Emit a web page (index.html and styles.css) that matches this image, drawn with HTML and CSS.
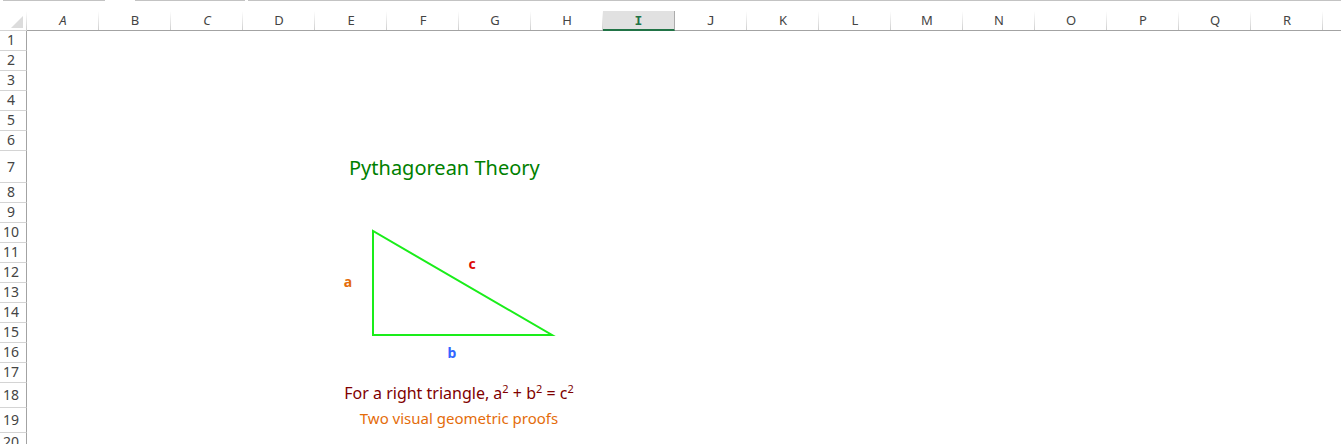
FILE: index.html
```html
<!DOCTYPE html>
<html lang="en">
<head>
<meta charset="utf-8">
<title>Pythagorean Theory</title>
<link rel="stylesheet" href="styles.css">
</head>
<body>
<main class="app">
  <div class="formula-bar"><span class="name-box"></span><span class="buttons"></span><span class="formula"></span></div>
  <div class="sheet">
    <table class="grid">
      <colgroup><col class="numbers"><col span="19" class="column"></colgroup>
      <thead>
        <tr>
          <td class="corner"><svg class="select-all" viewBox="0 0 12 12" aria-hidden="true"><path d="M12 0V12H0Z"/></svg></td>
          <th scope="col" class="slanted">A</th><th scope="col">B</th><th scope="col" class="slanted">C</th><th scope="col">D</th><th scope="col">E</th><th scope="col">F</th><th scope="col">G</th><th scope="col">H</th><th scope="col" class="barred selected">I</th><th scope="col" class="barred">J</th><th scope="col">K</th><th scope="col">L</th><th scope="col">M</th><th scope="col">N</th><th scope="col">O</th><th scope="col">P</th><th scope="col">Q</th><th scope="col">R</th><td></td>
        </tr>
      </thead>
      <tbody>
        <tr><th scope="row">1</th><td colspan="19"></td></tr>
        <tr><th scope="row">2</th><td colspan="19"></td></tr>
        <tr><th scope="row">3</th><td colspan="19"></td></tr>
        <tr><th scope="row">4</th><td colspan="19"></td></tr>
        <tr><th scope="row">5</th><td colspan="19"></td></tr>
        <tr><th scope="row">6</th><td colspan="19"></td></tr>
        <tr class="tall"><th scope="row">7</th><td colspan="4"></td><td colspan="4" class="title">Pythagorean Theory</td><td colspan="11"></td></tr>
        <tr><th scope="row">8</th><td colspan="19"></td></tr>
        <tr><th scope="row">9</th><td colspan="19"></td></tr>
        <tr><th scope="row">10</th><td colspan="19"></td></tr>
        <tr><th scope="row">11</th><td colspan="19"></td></tr>
        <tr><th scope="row">12</th><td colspan="19"></td></tr>
        <tr><th scope="row">13</th><td colspan="19"></td></tr>
        <tr><th scope="row">14</th><td colspan="19"></td></tr>
        <tr><th scope="row">15</th><td colspan="19"></td></tr>
        <tr><th scope="row">16</th><td colspan="19"></td></tr>
        <tr><th scope="row">17</th><td colspan="19"></td></tr>
        <tr class="medium"><th scope="row">18</th><td colspan="4"></td><td colspan="4" class="theorem">For a right triangle, a<sup>2</sup> + b<sup>2</sup> = c<sup>2</sup></td><td colspan="11"></td></tr>
        <tr class="medium"><th scope="row">19</th><td colspan="4"></td><td colspan="4" class="proofs">Two visual geometric proofs</td><td colspan="11"></td></tr>
        <tr><th scope="row">20</th><td colspan="19"></td></tr>
      </tbody>
    </table>
    <svg class="triangle" viewBox="0 0 220 140" role="img" aria-label="Right triangle with sides a, b and c">
      <path d="M33 9V113H212Z"/>
      <text class="side-a" x="8" y="65">a</text>
      <text class="side-b" x="112" y="136">b</text>
      <text class="side-c" x="132" y="47">c</text>
    </svg>
  </div>
</main>
</body>
</html>
```
FILE: styles.css
```css
body {
  margin: 0;
  background: #fff;
  font-family: "Comic Sans MS", "Noto Sans", sans-serif;
}

.app {
  height: 100vh;
  overflow: hidden;
}

.formula-bar {
  display: flex;
  height: 11px;
  padding-left: 3px;
}

.name-box,
.buttons,
.formula {
  height: 1px;
  background: #c3c3c3;
}

.name-box {
  width: 102px;
}

.buttons {
  width: 110px;
  margin: 0 3px 0 30px;
}

.formula {
  flex: 1;
}

.sheet {
  position: relative;
}

.grid {
  width: 1395px;
  table-layout: fixed;
  border-collapse: separate;
  border-spacing: 0;
}

.numbers {
  width: 27px;
}

.column {
  width: 72px;
}

.grid th,
.grid td {
  box-sizing: border-box;
  height: 20px;
  padding: 0;
  line-height: 17px;
  white-space: nowrap;
}

.grid th {
  padding-bottom: 2px;
  color: #444;
  font-size: 14px;
  font-weight: 400;
}

.grid thead th,
.grid thead td {
  border-bottom: 1px solid #a3a3a3;
  background: linear-gradient(#fff, #cfcfcf) right / 1px 100% no-repeat;
}

.grid thead th {
  padding-bottom: 0;
  font-size: 13px;
}

.grid thead .corner {
  padding: 3px 4px 0 11px;
  border-bottom-color: #d4d4d4;
}

.select-all {
  display: block;
  width: 12px;
  height: 12px;
  fill: #dcdcdc;
}

.grid .slanted {
  font-style: italic;
}

.grid .barred {
  font-family: "Comic Sans MS", "DejaVu Sans Mono", monospace;
}

.grid thead .selected {
  border-right: 1px solid #ababab;
  border-bottom: 2px solid #217346;
  background: #e1e1e1;
  color: #217346;
  font-weight: 700;
}

.grid tbody th {
  padding-right: 4px;
  border-right: 1px solid #a3a3a3;
  border-bottom: 1px solid #d4d4d4;
}

.grid .tall th,
.grid .tall td {
  height: 32px;
}

.grid .medium th,
.grid .medium td {
  height: 25px;
}

.grid .tall th {
  padding-bottom: 0;
}

.grid .title {
  padding-left: 34px;
  color: #008000;
  font-size: 20px;
}

.grid .theorem,
.grid .proofs {
  padding-bottom: 4px;
  text-align: center;
}

.theorem {
  color: #800000;
  font-size: 16px;
}

.theorem sup {
  font-size: 11px;
  line-height: 0;
}

.proofs {
  color: #e46c0a;
  font-size: 15px;
}

.triangle {
  position: absolute;
  top: 211px;
  left: 340px;
  width: 220px;
  height: 140px;
  font-size: 14px;
  font-weight: 700;
  text-anchor: middle;
}

.triangle path {
  fill: none;
  stroke: #1aed1a;
  stroke-width: 2;
}

.side-a {
  fill: #e46c0a;
}

.side-b {
  fill: #3366ff;
}

.side-c {
  fill: #dd0806;
}
```
